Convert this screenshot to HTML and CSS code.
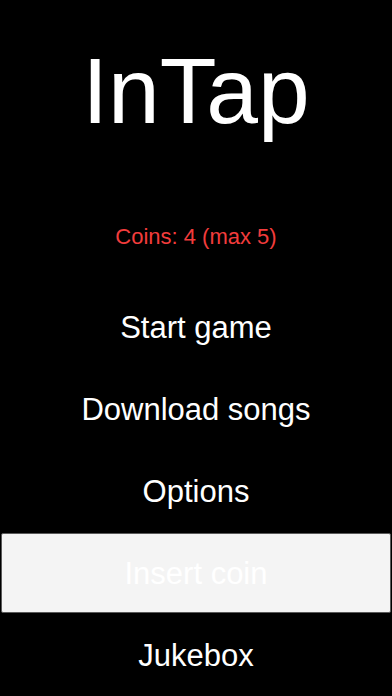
FILE: index.html
```html
<!DOCTYPE html>
<html lang="en">
<head>
<meta charset="utf-8">
<title>InTap</title>
<link rel="stylesheet" href="styles.css">
</head>
<body>
<main class="screen">
  <h1 class="title">InTap</h1>
  <p class="coins">Coins: 4 (max 5)</p>
  <nav class="menu">
    <div class="item">Start game</div>
    <div class="item">Download songs</div>
    <div class="item">Options</div>
    <div class="item item-selected"><span class="pill">Insert coin</span></div>
    <div class="item">Jukebox</div>
  </nav>
</main>
</body>
</html>
```
FILE: styles.css
```css
html, body {
  margin: 0;
  padding: 0;
  background: #000;
}
body {
  width: 392px;
  height: 696px;
  overflow: hidden;
  font-family: "Liberation Sans", Arial, Helvetica, sans-serif;
  color: #fff;
}
.screen {
  display: flex;
  flex-direction: column;
  align-items: stretch;
}
.title {
  margin: 45px 0 0;
  font-size: 93px;
  font-weight: normal;
  line-height: 93px;
  text-align: center;
}
.coins {
  margin: 88px 0 0;
  font-size: 22px;
  line-height: 22px;
  text-align: center;
  color: #f23c3c;
}
.menu {
  margin-top: 38px;
  display: flex;
  flex-direction: column;
}
.item {
  height: 82px;
  display: flex;
  align-items: center;
  justify-content: center;
  font-size: 31px;
  line-height: 31px;
}
.item-selected {
  align-items: stretch;
  justify-content: stretch;
  padding: 1px;
  box-sizing: border-box;
}
.pill {
  flex: 1;
  display: flex;
  align-items: center;
  justify-content: center;
  background: #f4f4f4;
  border: 1px solid #5a5a5a;
  border-radius: 2px;
  color: #fff;
}
```
